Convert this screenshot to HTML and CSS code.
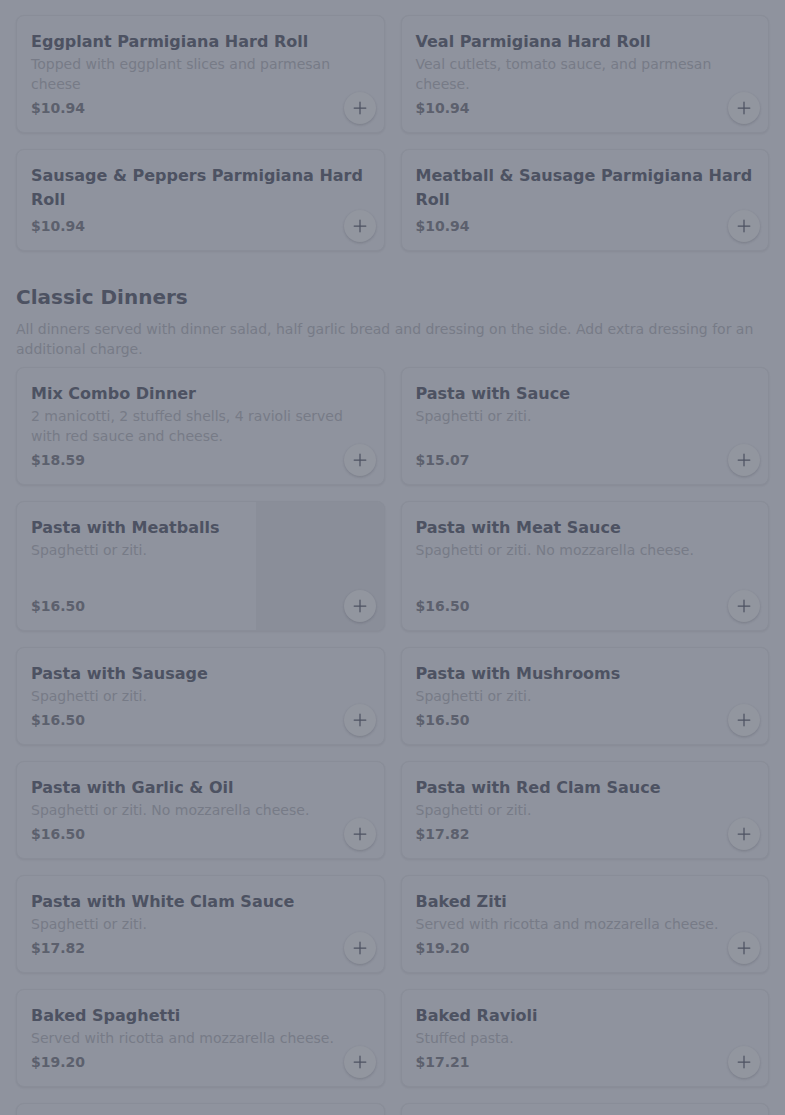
FILE: index.html
```html
<!DOCTYPE html>
<html lang="en">
<head>
<meta charset="utf-8">
<title>Menu</title>
<link rel="stylesheet" href="styles.css">
</head>
<body>
<main class="menu">
  <div class="grid">
    <div class="card"><div class="info"><h3 class="name">Eggplant Parmigiana Hard Roll</h3><p class="desc">Topped with eggplant slices and parmesan cheese</p><div class="price">$10.94</div></div><button class="add" aria-label="Add"><svg viewBox="0 0 24 24"><path d="M12 5v14M5 12h14"/></svg></button></div>
    <div class="card"><div class="info"><h3 class="name">Veal Parmigiana Hard Roll</h3><p class="desc">Veal cutlets, tomato sauce, and parmesan cheese.</p><div class="price">$10.94</div></div><button class="add" aria-label="Add"><svg viewBox="0 0 24 24"><path d="M12 5v14M5 12h14"/></svg></button></div>
    <div class="card"><div class="info"><h3 class="name">Sausage &amp; Peppers Parmigiana Hard Roll</h3><div class="price">$10.94</div></div><button class="add" aria-label="Add"><svg viewBox="0 0 24 24"><path d="M12 5v14M5 12h14"/></svg></button></div>
    <div class="card"><div class="info"><h3 class="name">Meatball &amp; Sausage Parmigiana Hard Roll</h3><div class="price">$10.94</div></div><button class="add" aria-label="Add"><svg viewBox="0 0 24 24"><path d="M12 5v14M5 12h14"/></svg></button></div>
  </div>

  <section class="section">
    <h2 class="section-title">Classic Dinners</h2>
    <p class="section-desc">All dinners served with dinner salad, half garlic bread and dressing on the side. Add extra dressing for an additional charge.</p>
    <div class="grid">
      <div class="card"><div class="info"><h3 class="name">Mix Combo Dinner</h3><p class="desc">2 manicotti, 2 stuffed shells, 4 ravioli served with red sauce and cheese.</p><div class="price">$18.59</div></div><button class="add" aria-label="Add"><svg viewBox="0 0 24 24"><path d="M12 5v14M5 12h14"/></svg></button></div>
      <div class="card"><div class="info"><h3 class="name">Pasta with Sauce</h3><p class="desc">Spaghetti or ziti.</p><div class="price">$15.07</div></div><button class="add" aria-label="Add"><svg viewBox="0 0 24 24"><path d="M12 5v14M5 12h14"/></svg></button></div>
      <div class="card"><div class="info"><h3 class="name">Pasta with Meatballs</h3><p class="desc">Spaghetti or ziti.</p><div class="price">$16.50</div></div><div class="thumb"></div><button class="add" aria-label="Add"><svg viewBox="0 0 24 24"><path d="M12 5v14M5 12h14"/></svg></button></div>
      <div class="card"><div class="info"><h3 class="name">Pasta with Meat Sauce</h3><p class="desc">Spaghetti or ziti. No mozzarella cheese.</p><div class="price">$16.50</div></div><button class="add" aria-label="Add"><svg viewBox="0 0 24 24"><path d="M12 5v14M5 12h14"/></svg></button></div>
      <div class="card"><div class="info"><h3 class="name">Pasta with Sausage</h3><p class="desc">Spaghetti or ziti.</p><div class="price">$16.50</div></div><button class="add" aria-label="Add"><svg viewBox="0 0 24 24"><path d="M12 5v14M5 12h14"/></svg></button></div>
      <div class="card"><div class="info"><h3 class="name">Pasta with Mushrooms</h3><p class="desc">Spaghetti or ziti.</p><div class="price">$16.50</div></div><button class="add" aria-label="Add"><svg viewBox="0 0 24 24"><path d="M12 5v14M5 12h14"/></svg></button></div>
      <div class="card"><div class="info"><h3 class="name">Pasta with Garlic &amp; Oil</h3><p class="desc">Spaghetti or ziti. No mozzarella cheese.</p><div class="price">$16.50</div></div><button class="add" aria-label="Add"><svg viewBox="0 0 24 24"><path d="M12 5v14M5 12h14"/></svg></button></div>
      <div class="card"><div class="info"><h3 class="name">Pasta with Red Clam Sauce</h3><p class="desc">Spaghetti or ziti.</p><div class="price">$17.82</div></div><button class="add" aria-label="Add"><svg viewBox="0 0 24 24"><path d="M12 5v14M5 12h14"/></svg></button></div>
      <div class="card"><div class="info"><h3 class="name">Pasta with White Clam Sauce</h3><p class="desc">Spaghetti or ziti.</p><div class="price">$17.82</div></div><button class="add" aria-label="Add"><svg viewBox="0 0 24 24"><path d="M12 5v14M5 12h14"/></svg></button></div>
      <div class="card"><div class="info"><h3 class="name">Baked Ziti</h3><p class="desc">Served with ricotta and mozzarella cheese.</p><div class="price">$19.20</div></div><button class="add" aria-label="Add"><svg viewBox="0 0 24 24"><path d="M12 5v14M5 12h14"/></svg></button></div>
      <div class="card"><div class="info"><h3 class="name">Baked Spaghetti</h3><p class="desc">Served with ricotta and mozzarella cheese.</p><div class="price">$19.20</div></div><button class="add" aria-label="Add"><svg viewBox="0 0 24 24"><path d="M12 5v14M5 12h14"/></svg></button></div>
      <div class="card"><div class="info"><h3 class="name">Baked Ravioli</h3><p class="desc">Stuffed pasta.</p><div class="price">$17.21</div></div><button class="add" aria-label="Add"><svg viewBox="0 0 24 24"><path d="M12 5v14M5 12h14"/></svg></button></div>
      <div class="card card-last"><div class="info"></div></div>
      <div class="card card-last"><div class="info"></div></div>
    </div>
  </section>
</main>
</body>
</html>
```

FILE: styles.css
```css
* { box-sizing: border-box; }

html, body {
  margin: 0;
  padding: 0;
  background: #8f939e;
  font-family: "DejaVu Sans", "Liberation Sans", sans-serif;
  overflow: hidden;
}

.menu {
  padding: 15px 16px 0;
}

.grid {
  display: grid;
  grid-template-columns: 1fr 1fr;
  gap: 16px;
}

.card {
  position: relative;
  display: flex;
  border: 1px solid #898d98;
  border-radius: 8px;
  background: #8f939e;
  box-shadow: 0 1px 2px rgba(40, 44, 56, 0.08);
  overflow: hidden;
}

.card-last {
  height: 98px;
}

.info {
  flex: 1;
  min-width: 0;
  display: flex;
  flex-direction: column;
  padding: 14px;
}

.name {
  margin: 0;
  font-size: 16px;
  line-height: 24px;
  font-weight: bold;
  color: #4d5262;
}

.desc {
  margin: 0;
  font-size: 14px;
  line-height: 20px;
  color: #777b87;
}

.price {
  margin-top: auto;
  padding-top: 4px;
  font-size: 14px;
  line-height: 20px;
  font-weight: bold;
  color: #5c606d;
}

.thumb {
  width: 128px;
  height: 128px;
  flex: none;
  background: #8a8e99;
}

.add {
  position: absolute;
  right: 8px;
  bottom: 8px;
  width: 32px;
  height: 32px;
  padding: 0;
  border: none;
  border-radius: 50%;
  background: #92969f;
  box-shadow: 0 1px 3px rgba(40, 44, 56, 0.12), 0 1px 2px rgba(40, 44, 56, 0.08);
  display: flex;
  align-items: center;
  justify-content: center;
}

.add svg {
  width: 20px;
  height: 20px;
  fill: none;
  stroke: #4d5262;
  stroke-width: 1.5;
  stroke-linecap: round;
}

.section {
  margin-top: 32px;
}

.section-title {
  margin: 0;
  font-size: 20px;
  line-height: 28px;
  font-weight: bold;
  color: #4d5262;
}

.section-desc {
  margin: 8px 0 8px;
  font-size: 14px;
  line-height: 20px;
  color: #777b87;
}
```
